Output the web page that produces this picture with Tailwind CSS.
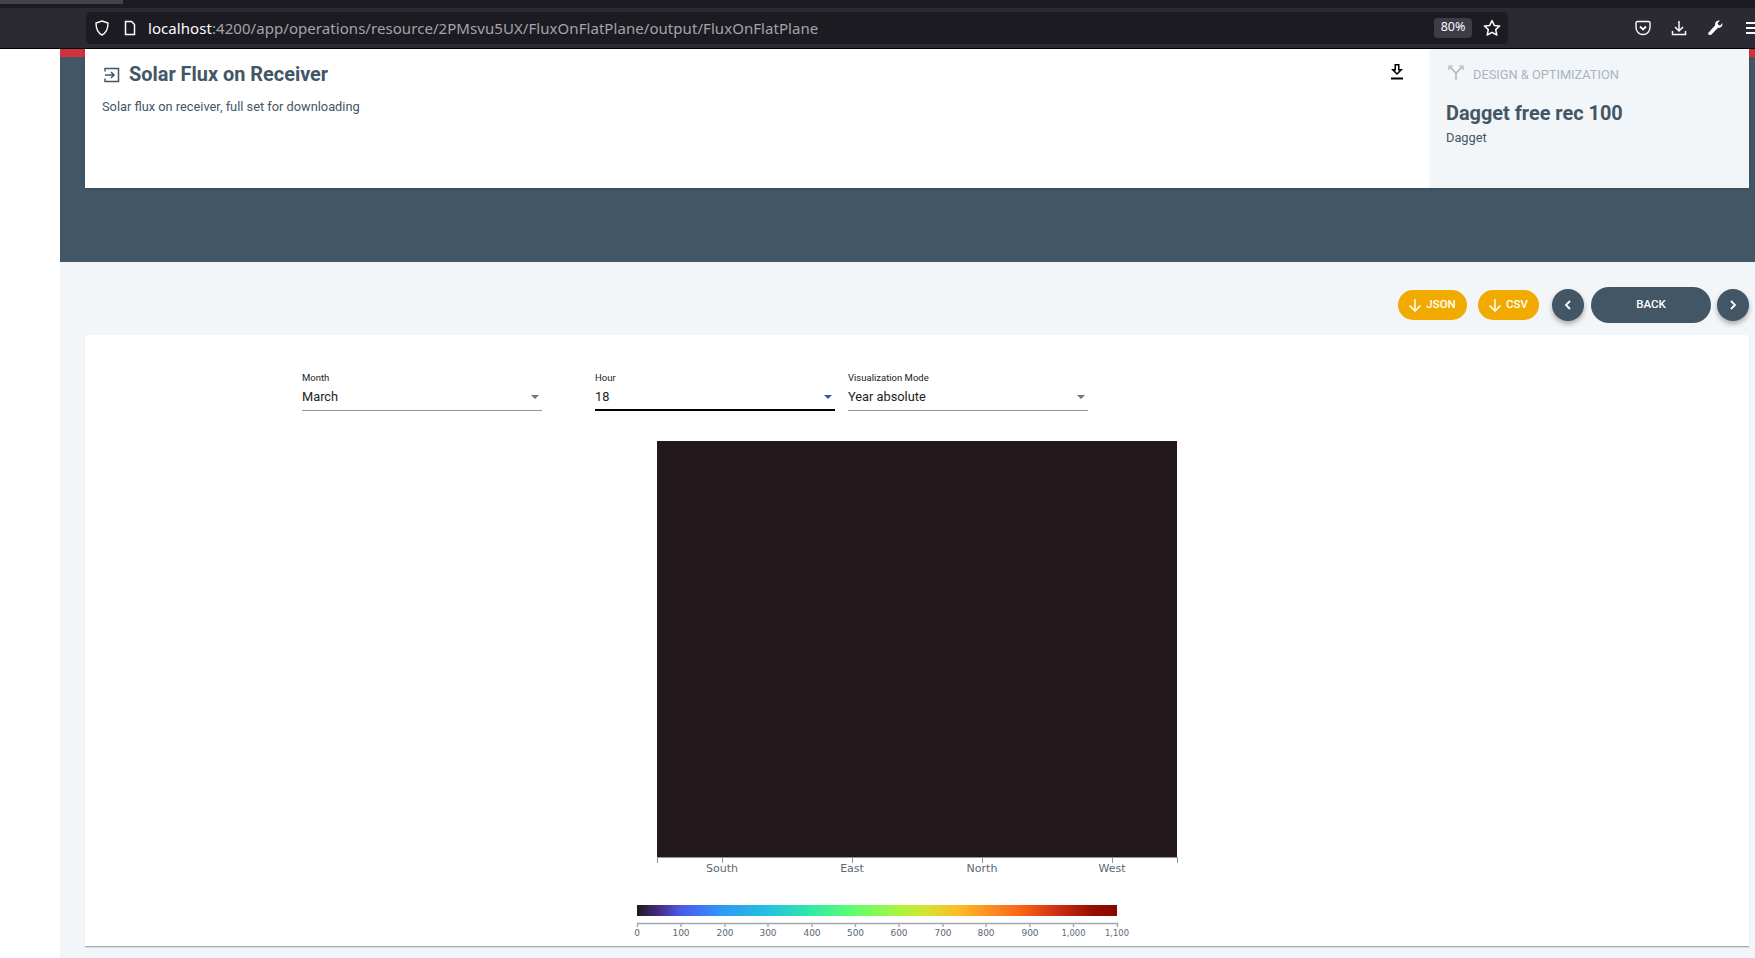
<!DOCTYPE html>
<html lang="en">
<head>
  <meta charset="UTF-8" />
  <title>Solar Flux on Receiver</title>
  <script src="https://cdn.jsdelivr.net/npm/@tailwindcss/browser@4"></script>
</head>
<body class="bg-white h-[958px] overflow-hidden flex flex-col font-['Roboto',sans-serif]">
  <!-- browser chrome -->
  <div class="h-[49px] shrink-0 bg-[#2b2a33] border-b border-black flex flex-col">
    <div class="h-[8px] bg-[#1c1b22]"><div class="h-[4px] w-[123px] bg-[#42414d]"></div></div>
    <div class="flex-1 flex items-center">
      <div class="ml-[86px] w-[1422px] shrink-0 h-[32px] mb-[1px] rounded bg-[#1c1b22] flex items-center relative">
        <svg class="ml-[8px] w-[16px] h-[16px]" viewBox="0 0 16 16" fill="none" stroke="#fbfbfe" stroke-width="1.4"><path d="M8 1 L14 3 C14 9 12 13 8 15 C4 13 2 9 2 3 Z"/></svg>
        <svg class="ml-[12px] w-[16px] h-[16px]" viewBox="0 0 16 16" fill="none" stroke="#fbfbfe" stroke-width="1.5"><path d="M3.5 1.5 H9.5 L12.5 4.5 V14.5 H3.5 Z"/></svg>
        <span class="ml-[10px] mt-[2px] text-[15px] text-[#a4a3a9] font-['Noto_Sans',sans-serif] tracking-[0.06px]"><span class="text-[#fbfbfe]">localhost</span>:4200/app/operations/resource/2PMsvu5UX/FluxOnFlatPlane/output/FluxOnFlatPlane</span>
        <span class="ml-auto w-[38px] h-[20px] rounded bg-[#3d3c47] text-[#fbfbfe] text-[12.5px] flex items-center justify-center font-['Noto_Sans',sans-serif]">80%</span>
        <svg class="ml-[11px] mr-[7px] w-[18px] h-[18px]" viewBox="0 0 18 18" fill="none" stroke="#fbfbfe" stroke-width="1.5" stroke-linejoin="round"><path d="M9 1.5 L11.3 6.4 L16.6 7 L12.7 10.6 L13.8 16 L9 13.3 L4.2 16 L5.3 10.6 L1.4 7 L6.7 6.4 Z"/></svg>
      </div>
      <div class="ml-[127px] shrink-0 flex items-center gap-[20px]">
        <svg class="w-[16px] h-[16px]" viewBox="0 0 16 16" fill="none" stroke="#fbfbfe" stroke-width="1.4"><path d="M2.5 1.5 H13.5 C14.5 1.5 15 2 15 3 V7 C15 11.5 12 14.5 8 14.5 C4 14.5 1 11.5 1 7 V3 C1 2 1.5 1.5 2.5 1.5 Z"/><path d="M5 6.5 L8 9.5 L11 6.5" stroke-width="1.8"/></svg>
        <svg class="w-[16px] h-[16px]" viewBox="0 0 16 16" fill="none" stroke="#fbfbfe" stroke-width="1.5"><path d="M8 1 V10.5 M4 7 L8 11 L12 7 M1.5 11 V14.5 H14.5 V11"/></svg>
        <svg class="w-[16px] h-[16px]" viewBox="0 0 16 16" fill="#fbfbfe"><path d="M15.5 4 C15.5 6.5 13.4 8.3 11 7.8 L4.5 14.5 C3.5 15.5 1 15.5 1.2 13 L8.2 5.2 C7.7 2.8 9.5 .6 12 .6 L12.8 .7 L10.5 3.2 L11.5 5 L13.3 5.4 L15.4 3 Z"/></svg>
        <div class="ml-[3px] w-[16px] flex flex-col gap-[3px]"><div class="h-[2px] bg-[#fbfbfe]"></div><div class="h-[2px] bg-[#fbfbfe]"></div><div class="h-[2px] bg-[#fbfbfe]"></div></div>
      </div>
    </div>
  </div>

  <div class="flex-1 flex min-h-0">
    <div class="w-[60px] shrink-0 bg-white"></div>
    <div class="flex-1 bg-[#f3f6f9] flex flex-col">
      <!-- hero -->
      <div class="h-[213px] shrink-0 bg-[#435666] border-t-[8px] border-[#d0323f] px-[25px] pr-[6px]">
        <div class="-mt-[8px] h-[139px] bg-white flex shadow-sm">
          <div class="flex-1 relative pl-[19px] pt-[15px]">
            <div class="flex items-center h-[22px]">
              <svg class="w-[16px] h-[16px]" viewBox="0 0 16 16" fill="none" stroke="#435666" stroke-width="1.5"><path d="M1 4.5 V1.5 H14.5 V14.5 H1 V11.5"/><path d="M1 8 H10 M7 5 L10 8 L7 11"/></svg>
              <h1 class="ml-[9px] text-[19.9px] font-bold text-[#435666] leading-[22px]">Solar Flux on Receiver</h1>
            </div>
            <p class="ml-[-2px] mt-[11px] text-[12.8px] text-[#435666]">Solar flux on receiver, full set for downloading</p>
            <svg class="absolute left-[1304px] top-[15px] w-[16px] h-[16px]" viewBox="0 0 16 16" fill="#000"><path d="M5.5 0 H10.5 V5 H14 L8 11 L2 5 H5.5 Z M7 1.5 V6.5 H5.6 L8 9 L10.4 6.5 H9 V1.5 Z" fill-rule="evenodd"/><path d="M2 13.5 H14 V15.5 H2 Z"/></svg>
          </div>
          <div class="w-[320px] shrink-0 bg-[#f3f6f9] pl-[17px] pt-[17px]">
            <div class="flex items-center h-[18px]">
              <svg class="ml-[2px] -mt-[4px] w-[16px] h-[16px]" viewBox="0 0 16 16" fill="none" stroke="#a9b4bf" stroke-width="1.5"><path d="M2 2 L8 8 V15 M14 2 L8 8"/><path d="M1 5 V1 H5 M11 1 H15 V5" stroke-width="1.2"/></svg>
              <span class="ml-[9px] text-[12.8px] text-[#a9b4bf]">DESIGN &amp; OPTIMIZATION</span>
            </div>
            <div class="mt-[18px] text-[19.9px] font-bold text-[#435666] leading-[24px]">Dagget free rec 100</div>
            <div class="mt-[2px] text-[12.8px] text-[#435666]">Dagget</div>
          </div>
        </div>
      </div>

      <!-- action buttons -->
      <div class="h-[73px] shrink-0 pt-[13px] flex items-center justify-end pr-[6px]">
        <button class="w-[69px] h-[30px] rounded-full bg-[#f0aa00] text-white text-[11.5px] font-medium flex items-center justify-center gap-[4px] pr-[1px]">
          <svg class="w-[14px] h-[14px]" viewBox="0 0 14 14" fill="none" stroke="white" stroke-width="1.5"><path d="M7 1 V13 M1.5 7.5 L7 13 L12.5 7.5"/></svg>JSON
        </button>
        <button class="ml-[11px] w-[61px] h-[30px] rounded-full bg-[#f0aa00] text-white text-[11.5px] font-medium flex items-center justify-center gap-[4px] pr-[1px]">
          <svg class="w-[14px] h-[14px]" viewBox="0 0 14 14" fill="none" stroke="white" stroke-width="1.5"><path d="M7 1 V13 M1.5 7.5 L7 13 L12.5 7.5"/></svg>CSV
        </button>
        <button class="ml-[13px] w-[32px] h-[32px] rounded-full bg-[#435666] shadow-[0_3px_5px_rgba(0,0,0,0.3)] flex items-center justify-center">
          <svg class="w-[10px] h-[10px]" viewBox="0 0 10 10" fill="none" stroke="white" stroke-width="1.8"><path d="M7 1 L3 5 L7 9"/></svg>
        </button>
        <button class="ml-[7px] w-[120px] h-[36px] rounded-full bg-[#435666] text-white text-[11.5px] font-medium">BACK</button>
        <button class="ml-[6px] w-[32px] h-[32px] rounded-full bg-[#435666] shadow-[0_3px_5px_rgba(0,0,0,0.3)] flex items-center justify-center">
          <svg class="w-[10px] h-[10px]" viewBox="0 0 10 10" fill="none" stroke="white" stroke-width="1.8"><path d="M3 1 L7 5 L3 9"/></svg>
        </button>
      </div>

      <!-- chart card -->
      <div class="ml-[25px] mr-[6px] h-[612px] bg-white rounded-t-[3px] border-b border-[#a8adb2] shadow-[0_1px_1px_rgba(0,0,0,0.12)] shrink-0">
        <div class="ml-[217px] mt-[35px] flex">
          <div class="w-[240px] h-[41px] border-b border-[#949494] relative">
            <div class="pt-[2px] text-[9.5px] leading-[12px] text-[#222]">Month</div>
            <div class="mt-[5px] text-[12.8px] leading-[16px] text-[#222]">March</div>
            <div class="absolute right-[3px] bottom-[11px] w-0 h-0 border-x-[4.5px] border-x-transparent border-t-[4.5px] border-t-[#757575]"></div>
          </div>
          <div class="ml-[53px] w-[240px] h-[41px] border-b-2 border-black relative">
            <div class="pt-[2px] text-[9.5px] leading-[12px] text-[#222]">Hour</div>
            <div class="mt-[5px] text-[12.8px] leading-[16px] text-[#222]">18</div>
            <div class="absolute right-[3px] bottom-[10px] w-0 h-0 border-x-[4.5px] border-x-transparent border-t-[4.5px] border-t-[#3f51b5]"></div>
          </div>
          <div class="ml-[13px] w-[240px] h-[41px] border-b border-[#949494] relative">
            <div class="pt-[2px] text-[9.5px] leading-[12px] text-[#222]">Visualization Mode</div>
            <div class="mt-[5px] text-[12.8px] leading-[16px] text-[#222]">Year absolute</div>
            <div class="absolute right-[3px] bottom-[11px] w-0 h-0 border-x-[4.5px] border-x-transparent border-t-[4.5px] border-t-[#757575]"></div>
          </div>
        </div>

        <div class="ml-[572px] mt-[30px] w-[520px] h-[416px] bg-[#23181c]"></div>
        <svg class="ml-[572px] block" width="522" height="30" font-family="DejaVu Sans, sans-serif" font-size="11" fill="#5a6875" text-anchor="middle">
          <path d="M.5 6 V.5 H520.5 V6 M65.5 0 V6 M195.5 0 V6 M325.5 0 V6 M455.5 0 V6" fill="none" stroke="#8a949d"/>
          <text x="65" y="15">South</text><text x="195" y="15">East</text><text x="325" y="15">North</text><text x="455" y="15">West</text>
        </svg>

        <svg class="ml-[545px] mt-[18px] block" width="520" height="45" font-family="DejaVu Sans, sans-serif" font-size="9" fill="#5a6875" text-anchor="middle">
          <defs>
            <linearGradient id="turbo">
              <stop offset="0" stop-color="#23171b"/><stop offset=".05" stop-color="#46308f"/><stop offset=".09" stop-color="#4a5ae6"/><stop offset=".14" stop-color="#3c7cf5"/><stop offset=".18" stop-color="#2f9af5"/><stop offset=".27" stop-color="#22c0e0"/><stop offset=".36" stop-color="#30e8a8"/><stop offset=".45" stop-color="#60fd70"/><stop offset=".545" stop-color="#a9f53e"/><stop offset=".6" stop-color="#d5e333"/><stop offset=".67" stop-color="#fdbb27"/><stop offset=".74" stop-color="#fd8a20"/><stop offset=".8" stop-color="#fb6415"/><stop offset=".88" stop-color="#ca2c10"/><stop offset=".95" stop-color="#960e00"/><stop offset="1" stop-color="#860600"/>
            </linearGradient>
          </defs>
          <rect x="7" y="0" width="480" height="11" fill="url(#turbo)"/>
          <path d="M7.5 22 V18.5 H487.5 V22 M51 18 V22 M95 18 V22 M138 18 V22 M182 18 V22 M225.5 18 V22 M269 18 V22 M313 18 V22 M356 18 V22 M400 18 V22 M443.5 18 V22" fill="none" stroke="#a0a8ae" stroke-width="1.4"/>
          <text x="7" y="30.5">0</text><text x="51" y="30.5">100</text><text x="95" y="30.5">200</text><text x="138" y="30.5">300</text><text x="182" y="30.5">400</text><text x="225.5" y="30.5">500</text><text x="269" y="30.5">600</text><text x="313" y="30.5">700</text><text x="356" y="30.5">800</text><text x="400" y="30.5">900</text><text x="443.5" y="30.5" font-size="8.4">1,000</text><text x="487" y="30.5" font-size="8.4">1,100</text>
        </svg>
      </div>
    </div>
  </div>
</body>
</html>
